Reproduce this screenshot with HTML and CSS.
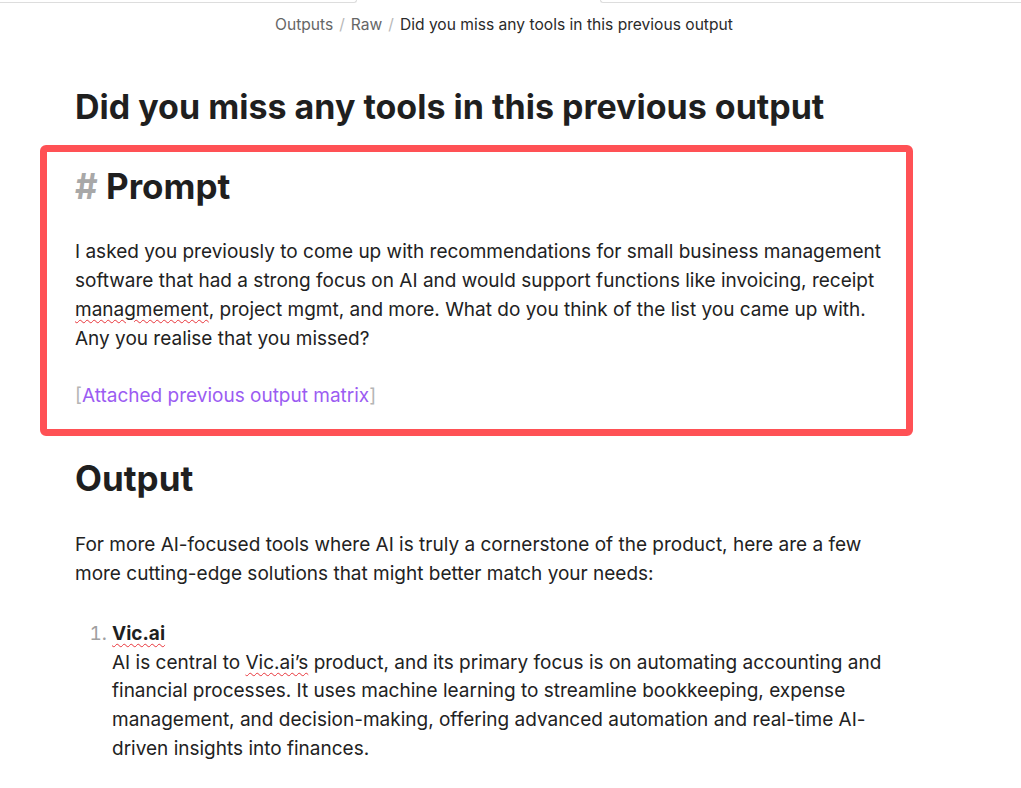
FILE: index.html
```html
<!DOCTYPE html>
<html>
<head>
<meta charset="utf-8">
<link rel="stylesheet" href="styles.css">
</head>
<body>
<div class="topbar">
  <div class="tab-edge left"></div>
  <div class="tab-gap"></div>
  <div class="tab-edge right"></div>
</div>
<nav class="crumbs">
  <span class="crumb">Outputs</span><span class="sep">/</span><span class="crumb">Raw</span><span class="sep">/</span><span class="crumb current">Did you miss any tools in this previous output</span>
</nav>
<main class="doc">
  <h1 class="title">Did you miss any tools in this previous output</h1>
  <section class="prompt">
    <h2 class="heading"><span class="hash">#</span> Prompt</h2>
    <p class="para first">I asked you previously to come up with recommendations for small business management software that had a strong focus on AI and would support functions like invoicing, receipt <span class="typo">managmement</span>, project mgmt, and more. What do you think of the list you came up with. Any you realise that you missed?</p>
    <p class="para attach"><span class="br">[</span><span class="link">Attached previous output matrix</span><span class="br">]</span></p>
  </section>
  <h2 class="heading output">Output</h2>
  <p class="para intro">For more AI-focused tools where AI is truly a cornerstone of the product, here are a few more cutting-edge solutions that might better match your needs:</p>
  <ol class="list">
    <li><strong class="typo">Vic.ai</strong><br>AI is central to <span class="typo">Vic.ai’s</span> product, and its primary focus is on automating accounting and financial processes. It uses machine learning to streamline bookkeeping, expense management, and decision-making, offering advanced automation and real-time AI-driven insights into finances.</li>
  </ol>
</main>
</body>
</html>
```
FILE: styles.css
```css
html, body {
  margin: 0;
  padding: 0;
  background: #ffffff;
}
body {
  font-family: Inter, "Noto Sans", sans-serif;
  color: #222222;
  overflow: hidden;
}
.topbar {
  display: flex;
  height: 3px;
}
.tab-edge {
  border-bottom: 1px solid #dddddd;
  height: 2px;
}
.tab-edge.left {
  width: 356px;
  border-right: 1px solid #dddddd;
  border-bottom-right-radius: 3px;
}
.tab-gap {
  width: 243px;
}
.tab-edge.right {
  flex: 1;
  border-left: 1px solid #dddddd;
  border-bottom-left-radius: 3px;
}
.crumbs {
  margin-top: 10px;
  padding-left: 275px;
  font-size: 15.6px;
  line-height: 24px;
  color: #666666;
}
.sep {
  color: #b8b8b8;
  margin: 0 6px;
}
.crumb.current {
  color: #2a2a2a;
}
.doc {
  margin-left: 75px;
  width: 826px;
}
.title {
  margin: 51px 0 0 0;
  font-size: 34px;
  line-height: 38.4px;
  font-weight: 700;
  color: #1f1f1f;
}
.prompt {
  margin: 19px -12px 0 -35px;
  border: 7px solid #ff5155;
  border-radius: 6px;
  padding: 16px 5px 18px 28px;
}
.heading {
  margin: 0;
  font-size: 35px;
  line-height: 36px;
  font-weight: 700;
  color: #1f1f1f;
}
.hash {
  color: #a8a8a8;
}
.heading.output {
  margin-top: 24px;
}
.para {
  font-size: 19px;
  line-height: 28.8px;
  margin: 0;
}
.para.first {
  margin-top: 34px;
}
.para.attach {
  margin-top: 28.8px;
}
.para.intro {
  margin-top: 35px;
}
.br {
  color: #b5b5b5;
}
.link {
  color: #9b5cf2;
}
.typo {
  text-decoration: underline wavy #e8353b;
  text-decoration-thickness: 1px;
  text-underline-offset: 3px;
}
.list {
  margin: 31px 0 0 0;
  padding-left: 37px;
  font-size: 19px;
  line-height: 28.8px;
}
.list li::marker {
  color: #a0a0a0;
}
.list strong {
  font-weight: 700;
  color: #1f1f1f;
}
```
